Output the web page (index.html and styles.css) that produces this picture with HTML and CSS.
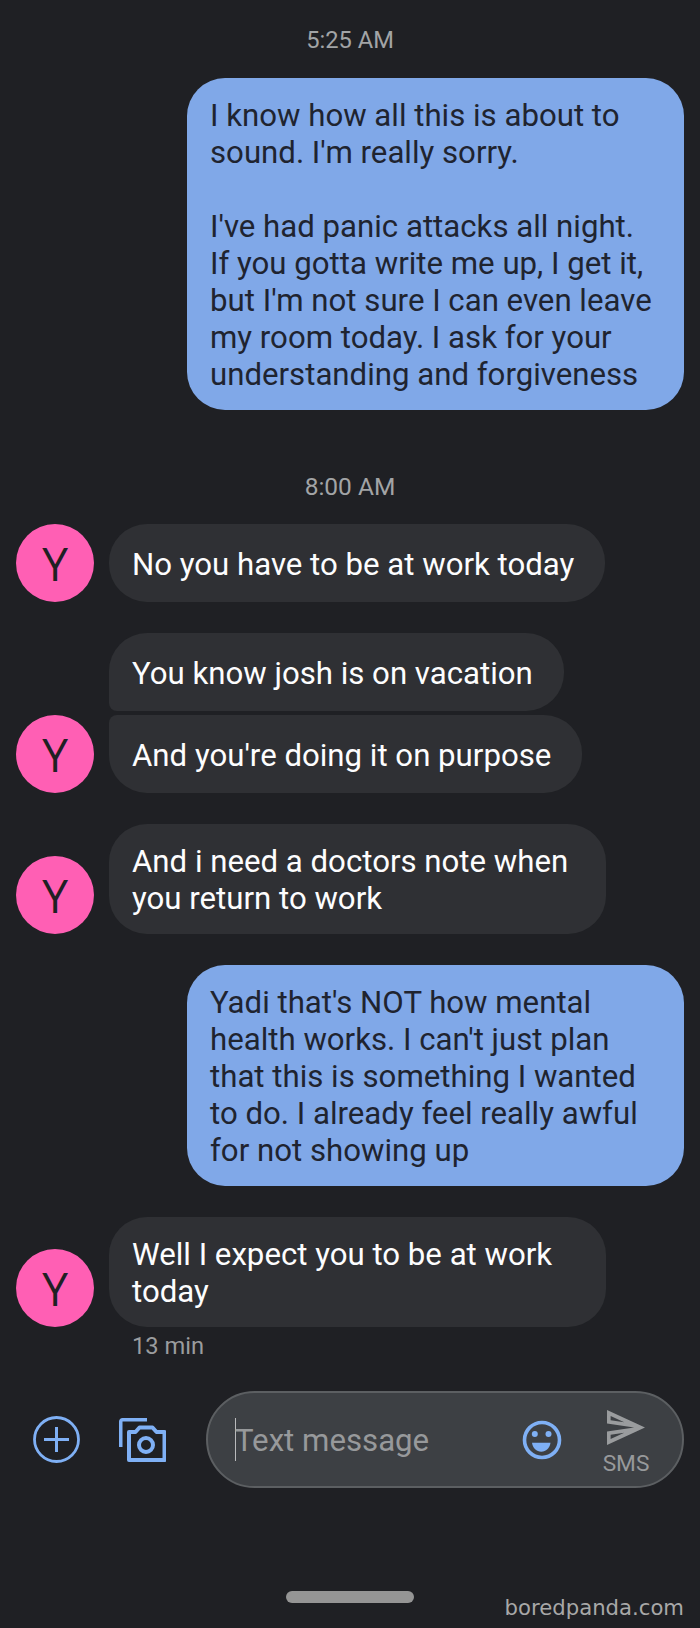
FILE: index.html
```html
<!DOCTYPE html>
<html lang="en">
<head>
<meta charset="utf-8">
<title>Messages</title>
<link rel="stylesheet" href="styles.css">
</head>
<body>
<main class="thread">
  <div class="stamp stamp-first">5:25 AM</div>
  <div class="row row-out first-out"><div class="bubble out">I know how all this is about to sound. I'm really sorry.<br><br>I've had panic attacks all night. If you gotta write me up, I get it, but I'm not sure I can even leave my room today. I ask for your understanding and forgiveness</div></div>

  <div class="stamp stamp-second">8:00 AM</div>
  <div class="row row-in first-in"><div class="avatar">Y</div><div class="bubble in">No you have to be at work today</div></div>
  <div class="row row-in gap-group"><div class="avatar-space"></div><div class="bubble in top">You know josh is on vacation</div></div>
  <div class="row row-in gap-tight"><div class="avatar">Y</div><div class="bubble in bottom">And you're doing it on purpose</div></div>
  <div class="row row-in gap-group"><div class="avatar">Y</div><div class="bubble in wide">And i need a doctors note when you return to work</div></div>
  <div class="row row-out gap-group"><div class="bubble out">Yadi that's NOT how mental health works. I can't just plan that this is something I wanted to do. I already feel really awful for not showing up</div></div>
  <div class="row row-in gap-group"><div class="avatar">Y</div><div class="bubble in wide">Well I expect you to be at work today</div></div>
  <div class="age">13 min</div>
</main>

<section class="composer">
  <svg class="icon-add" viewBox="0 0 47 47" aria-hidden="true">
    <circle cx="23.500" cy="23.500" r="22" fill="none" stroke="#7fb0f5" stroke-width="2.800"/>
    <path d="M23.500 11v25M11 23.500h25" fill="none" stroke="#7fb0f5" stroke-width="3"/>
  </svg>
  <svg class="icon-camera" viewBox="0 0 47 44" aria-hidden="true">
    <path d="M1.750 29V3.500a1.750 1.750 0 0 1 1.750-1.750h24.500" fill="none" stroke="#7fb0f5" stroke-width="3.500"/>
    <path d="M10 14h6.500l4-4.500h13l4 4.500h8v28h-35.500z" fill="none" stroke="#7fb0f5" stroke-width="4" stroke-linejoin="round"/>
    <circle cx="27" cy="27" r="7" fill="none" stroke="#7fb0f5" stroke-width="4"/>
  </svg>
  <div class="field">
    <span class="caret"></span>
    <span class="placeholder">Text message</span>
    <svg class="icon-smile" viewBox="0 0 40 40" aria-hidden="true">
      <circle cx="20" cy="20" r="17.500" fill="none" stroke="#7fb0f5" stroke-width="3.600"/>
      <circle cx="12.800" cy="14" r="3" fill="#7fb0f5"/>
      <circle cx="26.500" cy="14" r="3" fill="#7fb0f5"/>
      <path d="M10 22.700h18.500c-.8 5.500-4.500 9-9.250 9s-8.450-3.500-9.250-9z" fill="#7fb0f5"/>
    </svg>
    <div class="send">
      <svg class="icon-send" viewBox="2 3 21 18" preserveAspectRatio="none" aria-hidden="true">
        <path d="M4.010 6.030l7.510 3.220-7.520-1 .01-2.220m7.500 8.720L4 17.970v-2.220l7.510-1M2.010 3L2 10l15 2-15 2 .01 7L23 12 2.010 3z" fill="#9a9c9e"/>
      </svg>
      <span class="send-label">SMS</span>
    </div>
  </div>
</section>

<footer class="foot">
  <div class="home-bar"></div>
  <div class="brand">boredpanda.com</div>
</footer>
</body>
</html>
```

FILE: styles.css
```css
* { box-sizing: border-box; }

html, body { margin: 0; padding: 0; }

body {
  width: 700px;
  height: 1628px;
  overflow: hidden;
  background: #1f2024;
  font-family: Roboto, "Liberation Sans", sans-serif;
}

.thread { display: flex; flex-direction: column; }

.stamp {
  text-align: center;
  color: #a2a4a6;
  font-size: 23.700px;
  line-height: 28px;
}
.stamp-first { margin-top: 26px; }
.stamp-second { margin-top: 63px; font-size: 24.500px; }

.row { display: flex; }
.row-out { justify-content: flex-end; padding-right: 16px; }
.row-in { align-items: flex-end; padding-left: 16px; gap: 15px; }
.first-out { margin-top: 24px; }
.first-in { margin-top: 23px; }
.gap-group { margin-top: 31px; }
.gap-tight { margin-top: 4px; }

.bubble {
  display: flex;
  align-items: center;
  min-height: 78px;
  font-size: 31.200px;
  line-height: 37px;
  padding: 19px 31px 17px 23px;
  border-radius: 38px;
}
.out { width: 497px; background: #80a8e8; color: #1f2430; }
.in { background: #2f3034; color: #fdfdfe; }
.wide { width: 497px; }
.top { border-bottom-left-radius: 8px; }
.bottom { border-top-left-radius: 8px; }

.avatar, .avatar-space { width: 78px; height: 78px; flex: none; }
.avatar {
  border-radius: 50%;
  background: #ff5fb4;
  color: #1f2024;
  display: flex;
  align-items: center;
  justify-content: center;
  font-family: "Open Sans", Roboto, sans-serif;
  font-size: 46px;
}

.age {
  color: #9a9c9e;
  font-size: 23.700px;
  line-height: 28px;
  margin: 5px 0 0 132px;
}

.composer {
  display: flex;
  align-items: center;
  margin-top: 31px;
  height: 97px;
}
.icon-add { width: 47px; height: 47px; margin-left: 33px; flex: none; }
.icon-camera { width: 47px; height: 44px; margin-left: 39px; flex: none; }

.field {
  display: flex;
  align-items: center;
  margin-left: 40px;
  width: 478px;
  height: 97px;
  border: 2px solid #5c5f62;
  border-radius: 49px;
  background: #3d4044;
}
.caret { width: 1px; height: 43px; background: #b9babc; margin-left: 27px; flex: none; }
.placeholder { color: #97999b; font-size: 31.200px; flex: 1; margin: 1px 0 0 -1px; }
.icon-smile { width: 40px; height: 40px; flex: none; margin-right: 32px; }
.send {
  width: 64px;
  margin: 8px 24px 0 0;
  display: flex;
  flex-direction: column;
  align-items: center;
  flex: none;
}
.icon-send { width: 38px; height: 35px; }
.send-label { color: #97999b; font-size: 22.700px; line-height: 26px; margin-top: 6px; }

.foot { position: relative; padding-top: 103px; }
.home-bar {
  width: 128px;
  height: 12px;
  margin-left: 286px;
  border-radius: 6px;
  background: #959595;
}
.brand {
  position: absolute;
  right: 16px;
  top: 106px;
  color: #a8a8a8;
  font-family: "DejaVu Sans", sans-serif;
  font-size: 21.200px;
  line-height: 28px;
}
```
